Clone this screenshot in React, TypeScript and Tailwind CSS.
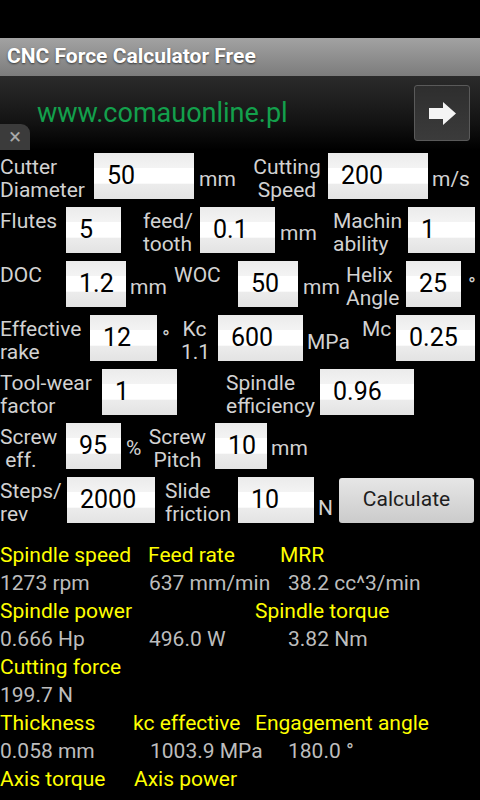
const field =
  "h-[46px] shrink-0 flex items-center pl-[13px] text-[25px] text-black bg-[linear-gradient(#ebebeb_0%,#f3f3f3_32%,#ffffff_33%,#ffffff_66%,#ececec_67%,#e3e3e3_100%)]";
const label = "shrink-0 text-[21px] leading-[23px] text-[#d2d2d2] pt-[5px]";
const top = "shrink-0 text-[21px] leading-[23px] text-[#d2d2d2] self-start pt-[3px]";
const unit = "shrink-0 text-[21px] leading-[23px] text-[#d2d2d2]";

const Field = ({ value, className }: { value: string; className: string }) => (
  <div className={`${field} ${className}`}>{value}</div>
);

const Arrow = () => (
  <svg width="27" height="23" viewBox="0 0 27 23">
    <polygon points="0,6 14,6 14,0 27,11.5 14,23 14,17 0,17" fill="#f4f4f4" />
  </svg>
);

export default function App() {
  return (
    <div className="w-[480px] h-[800px] overflow-hidden bg-black" style={{ fontFamily: "Roboto, 'Noto Sans', sans-serif" }}>
      {/* Status bar */}
      <div className="h-[38px] bg-black" />

      {/* Title bar */}
      <div className="h-[38px] flex items-center px-[7px] bg-[linear-gradient(#a2a2a2,#7c7c7c)]">
        <span className="text-white font-bold text-[21px] [text-shadow:0_1px_2px_rgba(0,0,0,0.6)]">
          CNC Force Calculator Free
        </span>
      </div>

      {/* Ad banner */}
      <div className="relative h-[74px] flex items-center justify-between bg-[linear-gradient(#2b2b2b,#141414_60%,#000000)]">
        <span className="pl-[37px] text-[27px] text-[#13a04c]">www.comauonline.pl</span>
        <div className="mr-[10px] w-[56px] h-[56px] flex items-center justify-center rounded-[3px] border border-[#5a5a5a] bg-[linear-gradient(#2e2e2e,#3b3b3b)]">
          <Arrow />
        </div>
        <div className="absolute left-0 bottom-0 w-[30px] h-[26px] rounded-tr-[9px] bg-[#3b3b3b] flex items-center justify-center text-[#a9a9a9] text-[22px] leading-none">
          ×
        </div>
      </div>

      {/* Form */}
      <div className="pt-[3px]">
        {/* Row 1 */}
        <div className="h-[46px] mb-[8px] flex items-center">
          <div className={`${label} w-[94px]`}>Cutter<br />Diameter</div>
          <Field value="50" className="w-[100px]" />
          <div className={`${unit} w-[58px] pl-[5px] pt-[6px]`}>mm</div>
          <div className={`${label} w-[76px] pr-[6px] text-center`}>Cutting<br />Speed</div>
          <Field value="200" className="w-[100px]" />
          <div className={`${unit} pl-[4px] pt-[6px]`}>m/s</div>
        </div>

        {/* Row 2 */}
        <div className="h-[46px] mb-[8px] flex items-center">
          <div className={`${top} w-[66px]`}>Flutes</div>
          <Field value="5" className="w-[55px]" />
          <div className={`${label} w-[79px] pl-[22px]`}>feed/<br />tooth</div>
          <Field value="0.1" className="w-[75px]" />
          <div className={`${unit} w-[58px] pl-[5px] pt-[6px]`}>mm</div>
          <div className={`${label} w-[75px]`}>Machin<br />ability</div>
          <Field value="1" className="w-[67px]" />
        </div>

        {/* Row 3 */}
        <div className="h-[46px] mb-[8px] flex items-center">
          <div className={`${top} w-[66px]`}>DOC</div>
          <Field value="1.2" className="w-[60px]" />
          <div className={`${unit} w-[48px] pl-[4px] pt-[6px]`}>mm</div>
          <div className={`${top} w-[64px]`}>WOC</div>
          <Field value="50" className="w-[60px]" />
          <div className={`${unit} w-[48px] pl-[5px] pt-[6px]`}>mm</div>
          <div className={`${label} w-[60px]`}>Helix<br />Angle</div>
          <Field value="25" className="w-[55px]" />
          <div className={`${unit} pl-[7px] pt-[2px]`}>°</div>
        </div>

        {/* Row 4 */}
        <div className="h-[46px] mb-[8px] flex items-center">
          <div className={`${label} w-[90px]`}>Effective<br />rake</div>
          <Field value="12" className="w-[67px]" />
          <div className={`${unit} w-[24px] pl-[5px]`}>°</div>
          <div className={`${label} w-[37px] pr-[10px] text-center`}>Kc<br />1.1</div>
          <Field value="600" className="w-[85px]" />
          <div className={`${unit} w-[59px] pl-[4px] pt-[9px]`}>MPa</div>
          <div className={`${top} w-[34px]`}>Mc</div>
          <Field value="0.25" className="w-[79px]" />
        </div>

        {/* Row 5 */}
        <div className="h-[46px] mb-[8px] flex items-center">
          <div className={`${label} w-[102px]`}>Tool-wear<br />factor</div>
          <Field value="1" className="w-[75px]" />
          <div className="w-[49px] shrink-0" />
          <div className={`${label} w-[94px]`}>Spindle<br />efficiency</div>
          <Field value="0.96" className="w-[94px]" />
        </div>

        {/* Row 6 */}
        <div className="h-[46px] mb-[8px] flex items-center">
          <div className={`${label} w-[66px] whitespace-pre`}>{"Screw\n eff."}</div>
          <Field value="95" className="w-[55px]" />
          <div className={`${unit} w-[27px] pl-[5px] pt-[4px]`}>%</div>
          <div className={`${label} w-[67px] pr-[8px] text-center`}>Screw<br />Pitch</div>
          <Field value="10" className="w-[52px]" />
          <div className={`${unit} pl-[4px] pt-[4px]`}>mm</div>
        </div>

        {/* Row 7 */}
        <div className="h-[46px] flex items-center">
          <div className={`${label} w-[67px]`}>Steps/<br />rev</div>
          <Field value="2000" className="w-[88px]" />
          <div className={`${label} w-[83px] pl-[10px]`}>Slide<br />friction</div>
          <Field value="10" className="w-[76px]" />
          <div className={`${unit} w-[25px] pl-[4px] pt-[16px]`}>N</div>
          <button className="w-[135px] h-[45px] shrink-0 rounded-[3px] bg-[linear-gradient(#e6e6e6,#cbcbcb)] text-[21px] text-[#1e1e1e]">
            Calculate
          </button>
        </div>
      </div>

      {/* Results */}
      <div className="pt-[18px] text-[21px] leading-[28px]">
        <div className="flex text-[#ffff00]">
          <div className="w-[148px] shrink-0">Spindle speed</div>
          <div className="w-[132px] shrink-0">Feed rate</div>
          <div>MRR</div>
        </div>
        <div className="flex text-[#bdbdbd]">
          <div className="w-[149px] shrink-0">1273 rpm</div>
          <div className="w-[139px] shrink-0">637 mm/min</div>
          <div>38.2 cc^3/min</div>
        </div>
        <div className="flex text-[#ffff00]">
          <div className="w-[255px] shrink-0">Spindle power</div>
          <div>Spindle torque</div>
        </div>
        <div className="flex text-[#bdbdbd]">
          <div className="w-[149px] shrink-0">0.666 Hp</div>
          <div className="w-[139px] shrink-0">496.0 W</div>
          <div>3.82 Nm</div>
        </div>
        <div className="text-[#ffff00]">Cutting force</div>
        <div className="text-[#bdbdbd]">199.7 N</div>
        <div className="flex text-[#ffff00]">
          <div className="w-[133px] shrink-0">Thickness</div>
          <div className="w-[122px] shrink-0">kc effective</div>
          <div>Engagement angle</div>
        </div>
        <div className="flex text-[#bdbdbd]">
          <div className="w-[150px] shrink-0">0.058 mm</div>
          <div className="w-[138px] shrink-0">1003.9 MPa</div>
          <div>180.0 °</div>
        </div>
        <div className="flex text-[#ffff00]">
          <div className="w-[134px] shrink-0">Axis torque</div>
          <div>Axis power</div>
        </div>
      </div>
    </div>
  );
}
